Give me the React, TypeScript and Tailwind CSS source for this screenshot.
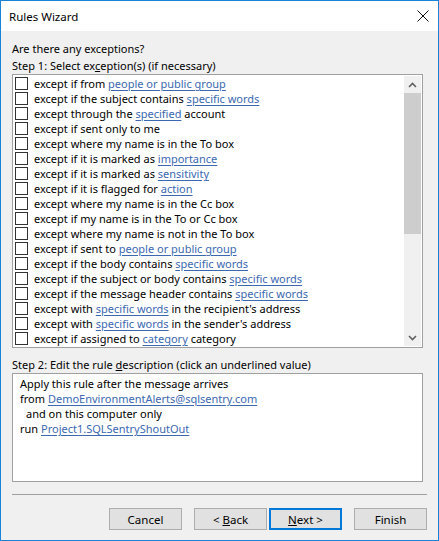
import React from "react";

type Part = string | { link: string };

const rules: Part[][] = [
  ["except if from ", { link: "people or public group" }],
  ["except if the subject contains ", { link: "specific words" }],
  ["except through the ", { link: "specified" }, " account"],
  ["except if sent only to me"],
  ["except where my name is in the To box"],
  ["except if it is marked as ", { link: "importance" }],
  ["except if it is marked as ", { link: "sensitivity" }],
  ["except if it is flagged for ", { link: "action" }],
  ["except where my name is in the Cc box"],
  ["except if my name is in the To or Cc box"],
  ["except where my name is not in the To box"],
  ["except if sent to ", { link: "people or public group" }],
  ["except if the body contains ", { link: "specific words" }],
  ["except if the subject or body contains ", { link: "specific words" }],
  ["except if the message header contains ", { link: "specific words" }],
  ["except with ", { link: "specific words" }, " in the recipient's address"],
  ["except with ", { link: "specific words" }, " in the sender's address"],
  ["except if assigned to ", { link: "category" }, " category"],
];

function Link({ children }: { children: React.ReactNode }) {
  return <span className="text-[#3b68b0] underline underline-offset-2">{children}</span>;
}

function Button({ children, primary, className = "" }: { children: React.ReactNode; primary?: boolean; className?: string }) {
  return (
    <button
      type="button"
      className={`h-[22px] w-[73px] bg-[#e1e1e1] text-[11.5px] text-black ${
        primary ? "border-2 border-[#0078d7]" : "border border-[#adadad]"
      } ${className}`}
    >
      {children}
    </button>
  );
}

export default function App() {
  return (
    <div
      className="flex h-[541px] w-[439px] flex-col border border-[#1883d7] bg-[#f0f0f0] text-[11px] leading-[15px] text-black"
      style={{ fontFamily: '"Noto Sans", "Open Sans", sans-serif' }}
    >
      {/* Title bar */}
      <div className="flex h-[30px] shrink-0 items-center justify-between bg-white pl-[8px] pr-[9px]">
        <span className="text-[11.5px]">Rules Wizard</span>
        <svg width="12" height="12" viewBox="0 0 12 12">
          <path d="M0.5 0.5 L11.5 11.5 M11.5 0.5 L0.5 11.5" stroke="#111" strokeWidth="1" />
        </svg>
      </div>

      <div className="flex flex-1 flex-col px-[11px] pt-[10px]">
        <div>Are there any exceptions?</div>
        <div className="mt-[2px]">
          Step 1: Select ex<span className="underline">c</span>eption(s) (if necessary)
        </div>

        {/* Exception list */}
        <div className="mt-[1px] flex h-[274px] w-[411px] border border-[#a0a0a0] bg-white">
          <div className="flex-1 overflow-hidden pt-[1px] pl-[2px]">
            {rules.map((parts, i) => (
              <div key={i} className="flex h-[15px] items-center whitespace-nowrap">
                <span className="mr-[6px] h-[13px] w-[13px] shrink-0 border border-[#333] bg-white" />
                <span>
                  {parts.map((p, j) =>
                    typeof p === "string" ? <span key={j}>{p}</span> : <Link key={j}>{p.link}</Link>
                  )}
                </span>
              </div>
            ))}
          </div>
          {/* Scrollbar */}
          <div className="my-[1px] mr-[1px] flex w-[17px] flex-col bg-[#f0f0f0]">
            <div className="flex h-[17px] items-center justify-center">
              <svg width="9" height="6" viewBox="0 0 9 6">
                <path d="M1 5 L4.5 1.5 L8 5" fill="none" stroke="#606060" strokeWidth="1.6" />
              </svg>
            </div>
            <div className="h-[141px] bg-[#cdcdcd]" />
            <div className="flex-1" />
            <div className="flex h-[17px] items-center justify-center">
              <svg width="9" height="6" viewBox="0 0 9 6">
                <path d="M1 1 L4.5 4.5 L8 1" fill="none" stroke="#606060" strokeWidth="1.6" />
              </svg>
            </div>
          </div>
        </div>

        <div className="mt-[9px]">
          Step 2: Edit the rule <span className="underline">d</span>escription (click an underlined value)
        </div>

        {/* Description */}
        <div className="mt-[1px] h-[109px] w-[411px] border border-[#a0a0a0] bg-white pl-[7px] pt-[2px]">
          <div>Apply this rule after the message arrives</div>
          <div>
            from <Link>DemoEnvironmentAlerts@sqlsentry.com</Link>
          </div>
          <div className="pl-[6px]">and on this computer only</div>
          <div>
            run <Link>Project1.SQLSentryShoutOut</Link>
          </div>
        </div>

        <div className="mt-[12px] h-px w-[415px] bg-[#a0a0a0]" />

        <div className="mt-[13px] flex w-[415px] justify-end">
          <Button>Cancel</Button>
          <Button className="ml-[12px]">
            &lt; <span className="underline">B</span>ack
          </Button>
          <Button primary className="ml-[2px]">
            <span className="underline">N</span>ext &gt;
          </Button>
          <Button className="ml-[12px]">Finish</Button>
        </div>
      </div>
    </div>
  );
}
